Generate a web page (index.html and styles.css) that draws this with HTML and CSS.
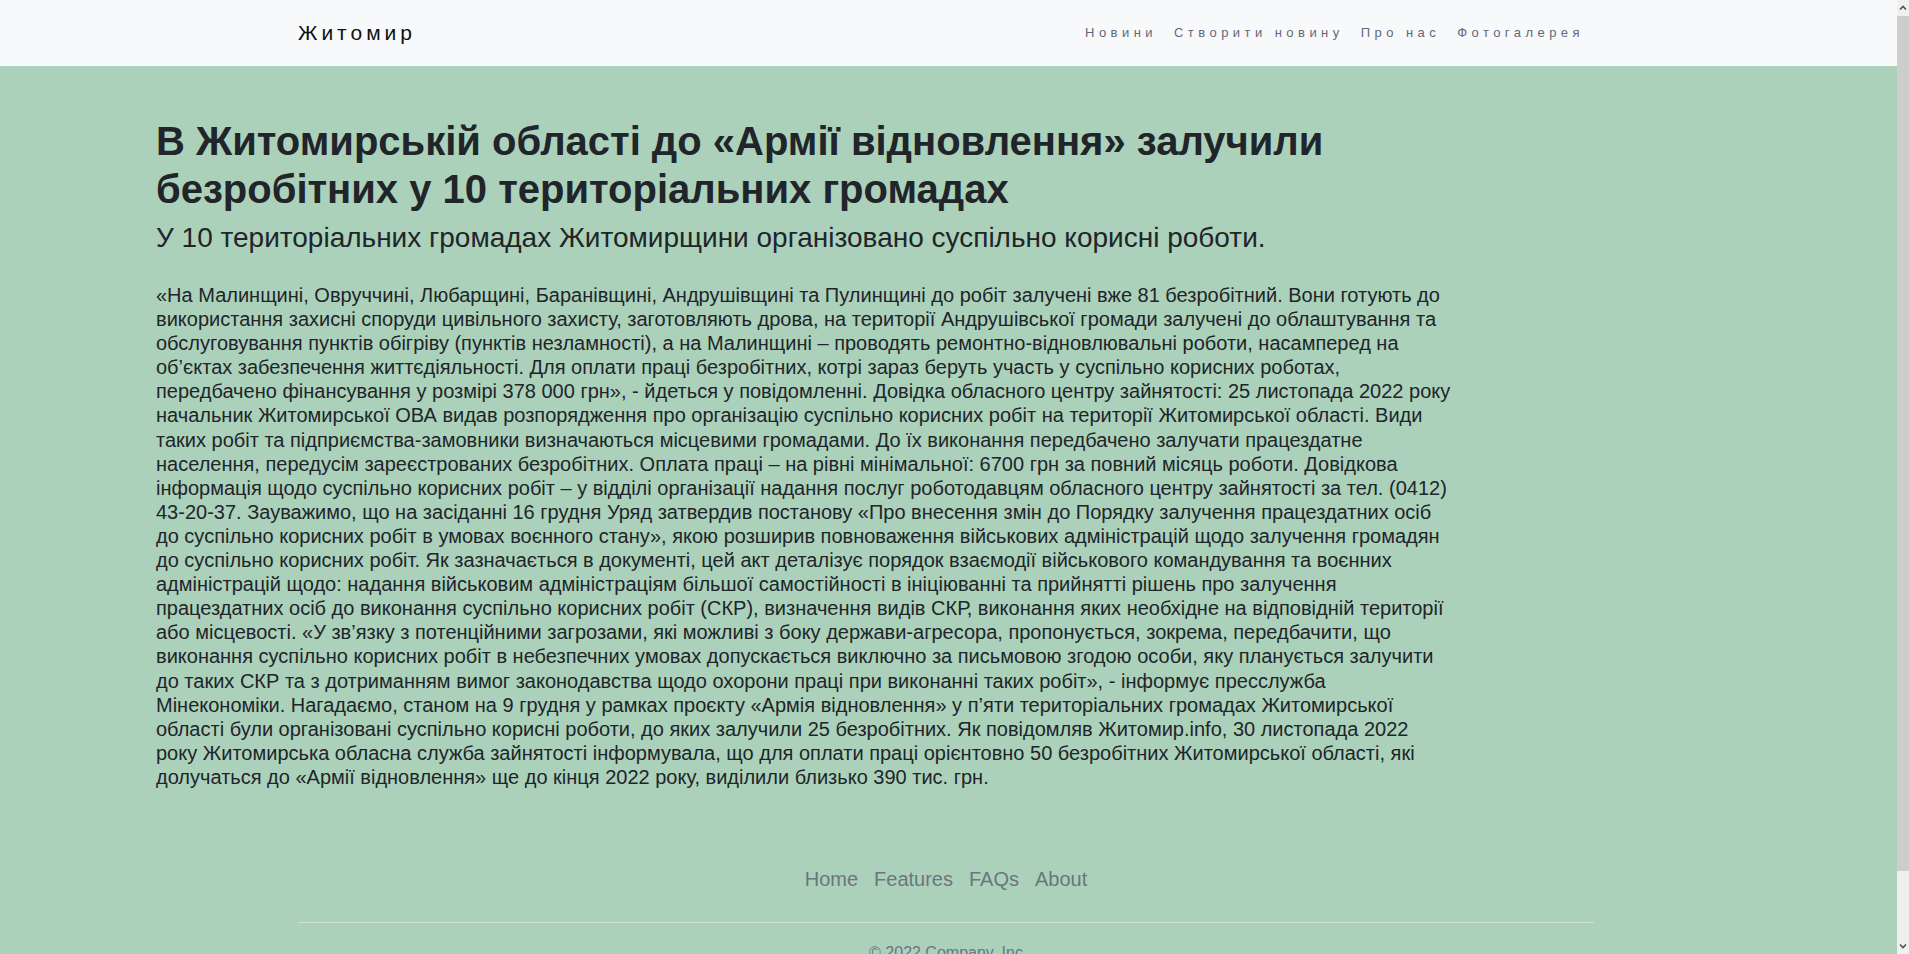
FILE: index.html
```html
<!DOCTYPE html>
<html lang="uk">
<head>
<meta charset="utf-8">
<title>Житомир</title>
<link rel="stylesheet" href="styles.css">
</head>
<body>
<nav class="navbar">
  <div class="nav-inner">
    <a class="brand" href="#">Житомир</a>
    <ul class="nav-links">
      <li><a href="#">Новини</a></li>
      <li><a href="#">Створити новину</a></li>
      <li><a href="#">Про нас</a></li>
      <li><a href="#">Фотогалерея</a></li>
    </ul>
  </div>
</nav>
<main class="page-main">
  <article class="article">
    <h1 class="title">В Житомирській області до «Армії відновлення» залучили безробітних у 10 територіальних громадах</h1>
    <h3 class="lead">У 10 територіальних громадах Житомирщини організовано суспільно корисні роботи.</h3>
    <p class="body-text">«На Малинщині, Овруччині, Любарщині, Баранівщині, Андрушівщині та Пулинщині до робіт залучені вже 81 безробітний. Вони готують до використання захисні споруди цивільного захисту, заготовляють дрова, на території Андрушівської громади залучені до облаштування та обслуговування пунктів обігріву (пунктів незламності), а на Малинщині – проводять ремонтно-відновлювальні роботи, насамперед на об’єктах забезпечення життєдіяльності. Для оплати праці безробітних, котрі зараз беруть участь у суспільно корисних роботах, передбачено фінансування у розмірі 378 000 грн», - йдеться у повідомленні. Довідка обласного центру зайнятості: 25 листопада 2022 року начальник Житомирської ОВА видав розпорядження про організацію суспільно корисних робіт на території Житомирської області. Види таких робіт та підприємства-замовники визначаються місцевими громадами. До їх виконання передбачено залучати працездатне населення, передусім зареєстрованих безробітних. Оплата праці – на рівні мінімальної: 6700 грн за повний місяць роботи. Довідкова інформація щодо суспільно корисних робіт – у відділі організації надання послуг роботодавцям обласного центру зайнятості за тел. (0412) 43-20-37. Зауважимо, що на засіданні 16 грудня Уряд затвердив постанову «Про внесення змін до Порядку залучення працездатних осіб до суспільно корисних робіт в умовах воєнного стану», якою розширив повноваження військових адміністрацій щодо залучення громадян до суспільно корисних робіт. Як зазначається в документі, цей акт деталізує порядок взаємодії військового командування та воєнних адміністрацій щодо: надання військовим адміністраціям більшої самостійності в ініціюванні та прийнятті рішень про залучення працездатних осіб до виконання суспільно корисних робіт (СКР), визначення видів СКР, виконання яких необхідне на відповідній території або місцевості. «У зв’язку з потенційними загрозами, які можливі з боку держави-агресора, пропонується, зокрема, передбачити, що виконання суспільно корисних робіт в небезпечних умовах допускається виключно за письмовою згодою особи, яку планується залучити до таких СКР та з дотриманням вимог законодавства щодо охорони праці при виконанні таких робіт», - інформує пресслужба Мінекономіки. Нагадаємо, станом на 9 грудня у рамках проєкту «Армія відновлення» у п’яти територіальних громадах Житомирської області були організовані суспільно корисні роботи, до яких залучили 25 безробітних. Як повідомляв Житомир.info, 30 листопада 2022 року Житомирська обласна служба зайнятості інформувала, що для оплати праці орієнтовно 50 безробітних Житомирської області, які долучаться до «Армії відновлення» ще до кінця 2022 року, виділили близько 390 тис. грн.</p>
  </article>
</main>
<footer class="footer">
  <ul class="footer-links">
    <li><a href="#">Home</a></li>
    <li><a href="#">Features</a></li>
    <li><a href="#">FAQs</a></li>
    <li><a href="#">About</a></li>
  </ul>
  <p class="copyright">© 2022 Company, Inc</p>
</footer>
<div class="scrollbar" aria-hidden="true">
  <svg class="sb-arrow sb-up" width="12" height="16" viewBox="0 0 12 16"><path d="M3 9.5 L6 6.5 L9 9.5" fill="none" stroke="#505050" stroke-width="1.6"/></svg>
  <div class="sb-thumb"></div>
  <svg class="sb-arrow sb-down" width="12" height="16" viewBox="0 0 12 16"><path d="M3 6.5 L6 9.5 L9 6.5" fill="none" stroke="#505050" stroke-width="1.6"/></svg>
</div>
</body>
</html>
```
FILE: styles.css
```css
html, body {
  margin: 0;
  padding: 0;
}
body {
  background: #abd1bb;
  color: #212529;
  font-family: "Liberation Sans", Arial, sans-serif;
  font-size: 20px;
  line-height: 1.2;
  padding-right: 17px;
}
a {
  text-decoration: none;
}
.navbar {
  background: #f8f9fa;
  height: 66px;
  margin-right: -5px;
  padding-right: 5px;
}
.nav-inner {
  max-width: 1296px;
  height: 100%;
  margin: 0 auto;
  display: flex;
  align-items: center;
  justify-content: space-between;
}
.brand {
  color: #111;
  font-size: 21px;
  letter-spacing: 4px;
}
.nav-links {
  list-style: none;
  margin: 0;
  padding: 0 6px 0 0;
  display: flex;
  gap: 9px;
}
.nav-links a {
  display: block;
  padding: 0 4px;
  color: #65687a;
  font-size: 13px;
  letter-spacing: 4.45px;
}
.page-main {
  width: 1580px;
  margin: 0 auto;
  padding-top: 51px;
}
.article {
  width: 1297px;
}
.title {
  margin: 0;
  font-size: 40px;
  font-weight: bold;
  line-height: 48px;
}
.lead {
  margin: 8px 0 0;
  font-size: 28px;
  font-weight: normal;
  line-height: 34px;
}
.body-text {
  margin: 28px 0 0;
  font-size: 20px;
  line-height: 24.1px;
}
.footer {
  width: 1296px;
  margin: 78px auto 0;
  padding-bottom: 50px;
}
.footer-links {
  list-style: none;
  margin: 0;
  padding: 0 0 31px;
  display: flex;
  justify-content: center;
  border-bottom: 1px solid #d6dfdb;
}
.footer-links a {
  display: block;
  color: #6c757d;
  padding: 0 8px;
  font-size: 20px;
  line-height: 24px;
}
.copyright {
  margin: 18px 0 0;
  text-align: center;
  color: #6c757d;
  font-size: 16px;
  line-height: 24px;
}
.scrollbar {
  position: fixed;
  top: 0;
  right: 0;
  width: 12px;
  height: 100vh;
  background: #f0f0f0;
}
.sb-arrow {
  position: absolute;
  left: 0;
  display: block;
}
.sb-up {
  top: 0;
}
.sb-down {
  bottom: 0;
}
.sb-thumb {
  position: absolute;
  top: 16px;
  left: 0;
  width: 12px;
  height: 855px;
  background: #cdcdcd;
}
```
